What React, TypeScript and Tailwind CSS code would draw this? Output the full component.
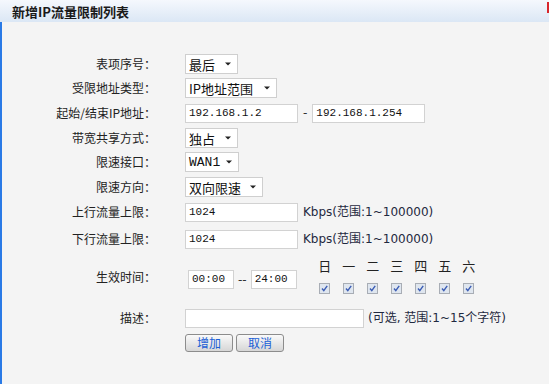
import React from "react";

const cjk = "font-['Noto_Sans_CJK_SC',sans-serif]";
const mono = "font-['Liberation_Mono','Noto_Sans_CJK_SC',monospace]";
const sans = "font-['DejaVu_Sans','Noto_Sans_CJK_SC',sans-serif]";

function Row({ label, h, children }: { label: string; h: string; children?: React.ReactNode }) {
  return (
    <div className={`flex items-center ${h}`}>
      <div className={`w-[154px] shrink-0 text-right text-[12px] leading-none text-[#222] ${cjk}`}>{label}</div>
      <div className="ml-[29px] flex items-center">{children}</div>
    </div>
  );
}

function Select({ value, w, isMono }: { value: string; w: string; isMono?: boolean }) {
  return (
    <div className={`flex h-[20px] items-center border border-[#cfcfcf] bg-white pl-[3px] pr-[6px] ${w}`}>
      <span className={`text-[13px] leading-none text-[#111] ${isMono ? mono : cjk}`}>{value}</span>
      <svg className="ml-auto" width="6" height="4" viewBox="0 0 6 4">
        <path d="M0 0.5 H6 L3 3.5 Z" fill="#222" />
      </svg>
    </div>
  );
}

function Input({ value, w }: { value?: string; w: string }) {
  return (
    <div className={`flex h-[19px] items-center border border-[#d2d2d2] bg-white pl-[3px] ${w}`}>
      <span className={`text-[11px] leading-none text-[#111] ${mono}`}>{value}</span>
    </div>
  );
}

function Check() {
  return (
    <svg width="11" height="11" viewBox="0 0 11 11">
      <rect x="0.5" y="0.5" width="10" height="10" fill="#dfe6ef" stroke="#a8adb5" />
      <path d="M3 5.5 L4.8 7.6 L8.2 2.8" fill="none" stroke="#3b5cb4" strokeWidth="1.4" />
    </svg>
  );
}

const days = ["日", "一", "二", "三", "四", "五", "六"];

export default function App() {
  return (
    <div className="relative h-[384px] w-[549px] overflow-hidden bg-[#f4f4f4]">
      {/* Title bar */}
      <div className="flex h-[22px] items-center bg-gradient-to-b from-[#f5f8fd] to-[#dbe7f5] pl-[12px]">
        <span className={`text-[13px] font-bold leading-none text-[#1a1a1a] ${cjk}`}>新增IP流量限制列表</span>
      </div>
      <div className="absolute right-0 top-[2px] h-[11px] w-[2px] bg-[#d8262b]" />

      {/* Form */}
      <div className="h-[362px] border-l-2 border-[#2a7ae6] pt-[30px]">
        <Row label="表项序号：" h="h-[24px]">
          <Select value="最后" w="w-[53px]" />
        </Row>
        <Row label="受限地址类型：" h="h-[24px]">
          <Select value="IP地址范围" w="w-[92px]" />
        </Row>
        <Row label="起始/结束IP地址：" h="h-[26px]">
          <Input value="192.168.1.2" w="w-[113px]" />
          <span className={`mx-[5px] text-[12px] text-[#333] ${sans}`}>-</span>
          <Input value="192.168.1.254" w="w-[113px]" />
        </Row>
        <Row label="带宽共享方式：" h="h-[24px]">
          <Select value="独占" w="w-[53px]" />
        </Row>
        <Row label="限速接口：" h="h-[24px]">
          <Select value="WAN1" w="w-[54px]" isMono />
        </Row>
        <Row label="限速方向：" h="h-[26px]">
          <Select value="双向限速" w="w-[78px]" />
        </Row>
        <Row label="上行流量上限：" h="h-[24px]">
          <Input value="1024" w="w-[113px]" />
          <span className={`ml-[5px] text-[12px] text-[#1f2940] ${sans}`}>Kbps(范围:1~100000)</span>
        </Row>
        <Row label="下行流量上限：" h="h-[30px]">
          <Input value="1024" w="w-[113px]" />
          <span className={`ml-[5px] text-[12px] text-[#1f2940] ${sans}`}>Kbps(范围:1~100000)</span>
        </Row>

        {/* Effective time */}
        <div className="flex h-[46px] items-start">
          <div className={`flex h-[46px] w-[154px] shrink-0 items-center justify-end text-[12px] leading-none text-[#222] ${cjk}`}>
            生效时间：
          </div>
          <div className="ml-[32px] mt-[16px] flex items-center">
            <Input value="00:00" w="w-[46px]" />
            <span className={`mx-[4px] text-[12px] leading-none text-[#333] ${sans}`}>--</span>
            <Input value="24:00" w="w-[46px]" />
          </div>
          <div className="ml-[16px] mt-[2px] flex flex-col">
            <div className="flex h-[18px]">
              {days.map((d) => (
                <div key={d} className={`flex w-[24px] items-center justify-center text-[13px] leading-none text-[#222] ${cjk}`}>
                  {d}
                </div>
              ))}
            </div>
            <div className="mt-[9px] flex">
              {days.map((d) => (
                <div key={d} className="flex w-[24px] justify-center">
                  <Check />
                </div>
              ))}
            </div>
          </div>
        </div>

        <Row label="描述：" h="mt-[7px] h-[22px]">
          <Input w="w-[179px]" />
          <span className={`ml-[4px] text-[12px] text-[#1f2940] ${sans}`}>(可选, 范围:1~15个字符)</span>
        </Row>

        <div className="ml-[183px] mt-[5px] flex gap-[3px]">
          <button className={`h-[18px] w-[48px] rounded-[3px] border border-[#8c8c8c] bg-gradient-to-b from-[#fafafa] to-[#d6d6d6] text-[12px] leading-none text-[#1a5fd6] ${cjk}`}>
            增加
          </button>
          <button className={`h-[18px] w-[48px] rounded-[3px] border border-[#8c8c8c] bg-gradient-to-b from-[#fafafa] to-[#d6d6d6] text-[12px] leading-none text-[#1a5fd6] ${cjk}`}>
            取消
          </button>
        </div>
      </div>
    </div>
  );
}
